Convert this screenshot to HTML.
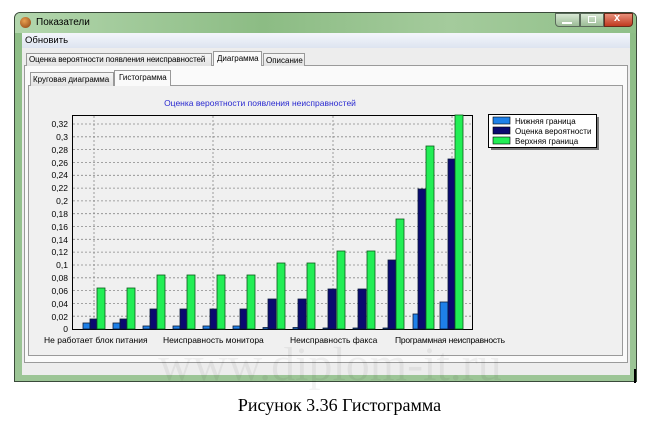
<!DOCTYPE html>
<html><head><meta charset="utf-8"><style>
*{margin:0;padding:0;box-sizing:border-box}
body{width:659px;height:421px;background:#fff;position:relative;overflow:hidden;font-family:"Liberation Sans",sans-serif}
.a{position:absolute}
.t{font-size:8px;color:#000;white-space:nowrap}
</style></head><body>
<!-- window frame -->
<div class="a" style="left:14px;top:12px;width:623px;height:370px;border:1px solid #3a4a3a;border-radius:6px 6px 0 0;background:linear-gradient(180deg,#a9cfa3 0,#8dbd86 20px,#9cc596 100%)"></div>
<div class="a" style="left:15px;top:13px;width:621px;height:20px;border-radius:5px 5px 0 0;background:linear-gradient(90deg,#b3d6ad,#8cbc84 40%,#a4cb9c 70%,#8fbf88)"></div>
<div class="a" style="left:20px;top:17px;width:11px;height:11px;border-radius:50%;background:radial-gradient(circle at 40% 35%,#e8a050,#8a4010)"></div>
<div class="a t" style="left:36px;top:17px;font-size:10px">Показатели</div>
<!-- caption buttons -->
<div class="a" style="left:555px;top:13px;width:25px;height:14px;border:1px solid #5a6a5a;border-radius:0 0 0 4px;background:linear-gradient(#d8e8d4,#9cbc96)"></div>
<div class="a" style="left:562px;top:22px;width:10px;height:2px;background:#fff"></div>
<div class="a" style="left:580px;top:13px;width:24px;height:14px;border:1px solid #5a6a5a;background:linear-gradient(#d8e8d4,#9cbc96)"></div>
<div class="a" style="left:588px;top:16px;width:8px;height:7px;border:1px solid #fff"></div>
<div class="a" style="left:604px;top:13px;width:29px;height:14px;border:1px solid #6a2a1a;border-radius:0 0 4px 0;background:linear-gradient(#e8907a,#c0391f)"></div>
<div class="a" style="left:614px;top:12px;color:#fff;font-size:11px;font-weight:bold">x</div>
<!-- client -->
<div class="a" style="left:22px;top:33px;width:608px;height:342px;background:#ededed"></div>
<div class="a" style="left:22px;top:33px;width:608px;height:15px;background:linear-gradient(#f4f6fb,#dde4f0)"></div>
<div class="a t" style="left:25px;top:35px;font-size:9.5px">Обновить</div>
<!-- outer tabs -->
<div class="a" style="left:24px;top:65px;width:604px;height:298px;border:1px solid #9a9a9a;background:#fafafa"></div>
<div class="a" style="left:26px;top:53px;width:186px;height:13px;border:1px solid #999;border-bottom:none;background:linear-gradient(#f6f6f6,#e2e2e2)"></div>
<div class="a t" style="left:29px;top:55px;letter-spacing:-0.1px">Оценка вероятности появления неисправностей</div>
<div class="a" style="left:213px;top:51px;width:49px;height:15px;border:1px solid #999;border-bottom:none;background:#fafafa"></div>
<div class="a t" style="left:217px;top:54px">Диаграмма</div>
<div class="a" style="left:263px;top:53px;width:42px;height:13px;border:1px solid #999;border-bottom:none;background:linear-gradient(#f6f6f6,#e2e2e2)"></div>
<div class="a t" style="left:266px;top:56px">Описание</div>
<!-- inner tabs -->
<div class="a" style="left:28px;top:85px;width:595px;height:271px;border:1px solid #9a9a9a;background:#f0f0f0"></div>
<div class="a" style="left:30px;top:72px;width:84px;height:14px;border:1px solid #999;border-bottom:none;background:linear-gradient(#f6f6f6,#e2e2e2)"></div>
<div class="a t" style="left:33px;top:75px">Круговая диаграмма</div>
<div class="a" style="left:114px;top:70px;width:57px;height:16px;border:1px solid #999;border-bottom:none;background:#fafafa"></div>
<div class="a t" style="left:119px;top:73px">Гистограмма</div>
<!-- chart -->
<svg class="a" style="left:0;top:0" width="659" height="421" font-family="Liberation Sans,sans-serif" font-size="8.5">
<text x="260" y="106" text-anchor="middle" fill="#2a2ad0" font-size="8.5">Оценка вероятности появления неисправностей</text>
<rect x="72.5" y="115.5" width="400" height="214" fill="#f0f0f0" stroke="#000"/>
<g stroke="#888" stroke-dasharray="2,2" stroke-width="0.8">
<line x1="73" x2="472" y1="124" y2="124"/><line x1="73" x2="472" y1="136.8" y2="136.8"/><line x1="73" x2="472" y1="149.6" y2="149.6"/><line x1="73" x2="472" y1="162.5" y2="162.5"/><line x1="73" x2="472" y1="175.3" y2="175.3"/><line x1="73" x2="472" y1="188.1" y2="188.1"/><line x1="73" x2="472" y1="200.9" y2="200.9"/><line x1="73" x2="472" y1="213.7" y2="213.7"/><line x1="73" x2="472" y1="226.5" y2="226.5"/><line x1="73" x2="472" y1="239.3" y2="239.3"/><line x1="73" x2="472" y1="252.1" y2="252.1"/><line x1="73" x2="472" y1="265" y2="265"/><line x1="73" x2="472" y1="277.8" y2="277.8"/><line x1="73" x2="472" y1="290.6" y2="290.6"/><line x1="73" x2="472" y1="303.4" y2="303.4"/><line x1="73" x2="472" y1="316.2" y2="316.2"/>
<line x1="94" x2="94" y1="116" y2="329"/><line x1="213" x2="213" y1="116" y2="329"/><line x1="333" x2="333" y1="116" y2="329"/><line x1="452" x2="452" y1="116" y2="329"/>
</g>
<g text-anchor="end" font-size="8.5">
<text x="68" y="127">0,32</text><text x="68" y="140">0,3</text><text x="68" y="153">0,28</text><text x="68" y="166">0,26</text><text x="68" y="178">0,24</text><text x="68" y="191">0,22</text><text x="68" y="204">0,2</text><text x="68" y="217">0,18</text><text x="68" y="230">0,16</text><text x="68" y="243">0,14</text><text x="68" y="255">0,12</text><text x="68" y="268">0,1</text><text x="68" y="281">0,08</text><text x="68" y="294">0,06</text><text x="68" y="307">0,04</text><text x="68" y="320">0,02</text><text x="68" y="332">0</text>
</g>
<g stroke="#0a1a3a" stroke-width="0.8">
<g fill="#1e80e8">
<rect x="83" y="323" width="7" height="6"/><rect x="113" y="323" width="7" height="6"/><rect x="143" y="326" width="7" height="3"/><rect x="173" y="326" width="7" height="3"/><rect x="203" y="326" width="7" height="3"/><rect x="233" y="326" width="7" height="3"/><rect x="263" y="327.5" width="7" height="1.5"/><rect x="293" y="327.5" width="7" height="1.5"/><rect x="323" y="328" width="7" height="1"/><rect x="353" y="328" width="7" height="1"/><rect x="383" y="328" width="7" height="1"/><rect x="413" y="314" width="7" height="15"/><rect x="440" y="302" width="8" height="27"/>
</g>
<g fill="#0a0a70">
<rect x="90" y="319" width="7" height="10"/><rect x="120" y="319" width="7" height="10"/><rect x="150" y="309" width="7" height="20"/><rect x="180" y="309" width="7" height="20"/><rect x="210" y="309" width="7" height="20"/><rect x="240" y="309" width="7" height="20"/><rect x="268" y="299" width="8" height="30"/><rect x="298" y="299" width="8" height="30"/><rect x="328" y="289" width="8" height="40"/><rect x="358" y="289" width="8" height="40"/><rect x="388" y="260" width="8" height="69"/><rect x="418" y="189" width="8" height="140"/><rect x="448" y="159" width="7" height="170"/>
</g>
<g fill="#22ee55" stroke="#0a5a1a">
<rect x="97" y="288" width="8" height="41"/><rect x="127" y="288" width="8" height="41"/><rect x="157" y="275" width="8" height="54"/><rect x="187" y="275" width="8" height="54"/><rect x="217" y="275" width="8" height="54"/><rect x="247" y="275" width="8" height="54"/><rect x="277" y="263" width="8" height="66"/><rect x="307" y="263" width="8" height="66"/><rect x="337" y="251" width="8" height="78"/><rect x="367" y="251" width="8" height="78"/><rect x="396" y="219" width="8" height="110"/><rect x="426" y="146" width="8" height="183"/><rect x="455" y="115" width="8" height="214"/>
</g>
</g>
<g font-size="8.5">
<text x="44" y="343">Не работает блок питания</text>
<text x="163" y="343">Неисправность монитора</text>
<text x="290" y="343">Неисправность факса</text>
<text x="395" y="343" textLength="110">Программная неисправность</text>
</g>
<rect x="491" y="117" width="108" height="33" fill="#777"/>
<rect x="488.5" y="114.5" width="108" height="33" fill="#fff" stroke="#000"/>
<rect x="493" y="117" width="17" height="7" fill="#1e80e8" stroke="#000" stroke-width="0.6"/>
<rect x="493" y="127" width="17" height="7" fill="#0a0a70" stroke="#000" stroke-width="0.6"/>
<rect x="493" y="137" width="17" height="7" fill="#22ee55" stroke="#000" stroke-width="0.6"/>
<text x="515" y="124" font-size="8">Нижняя граница</text>
<text x="515" y="134" font-size="8">Оценка вероятности</text>
<text x="515" y="144" font-size="8">Верхняя граница</text>
<text x="330" y="380" text-anchor="middle" font-family="Liberation Serif,serif" font-size="48" fill="#000" fill-opacity="0.05">www.diplom-it.ru</text>
<rect x="634" y="369" width="2" height="14" fill="#000"/>
</svg>
<div class="a" style="left:0;top:395px;width:659px;text-align:center;font-family:'Liberation Serif',serif;font-size:18px;padding-left:20px">Рисунок 3.36 Гистограмма</div>
</body></html>
